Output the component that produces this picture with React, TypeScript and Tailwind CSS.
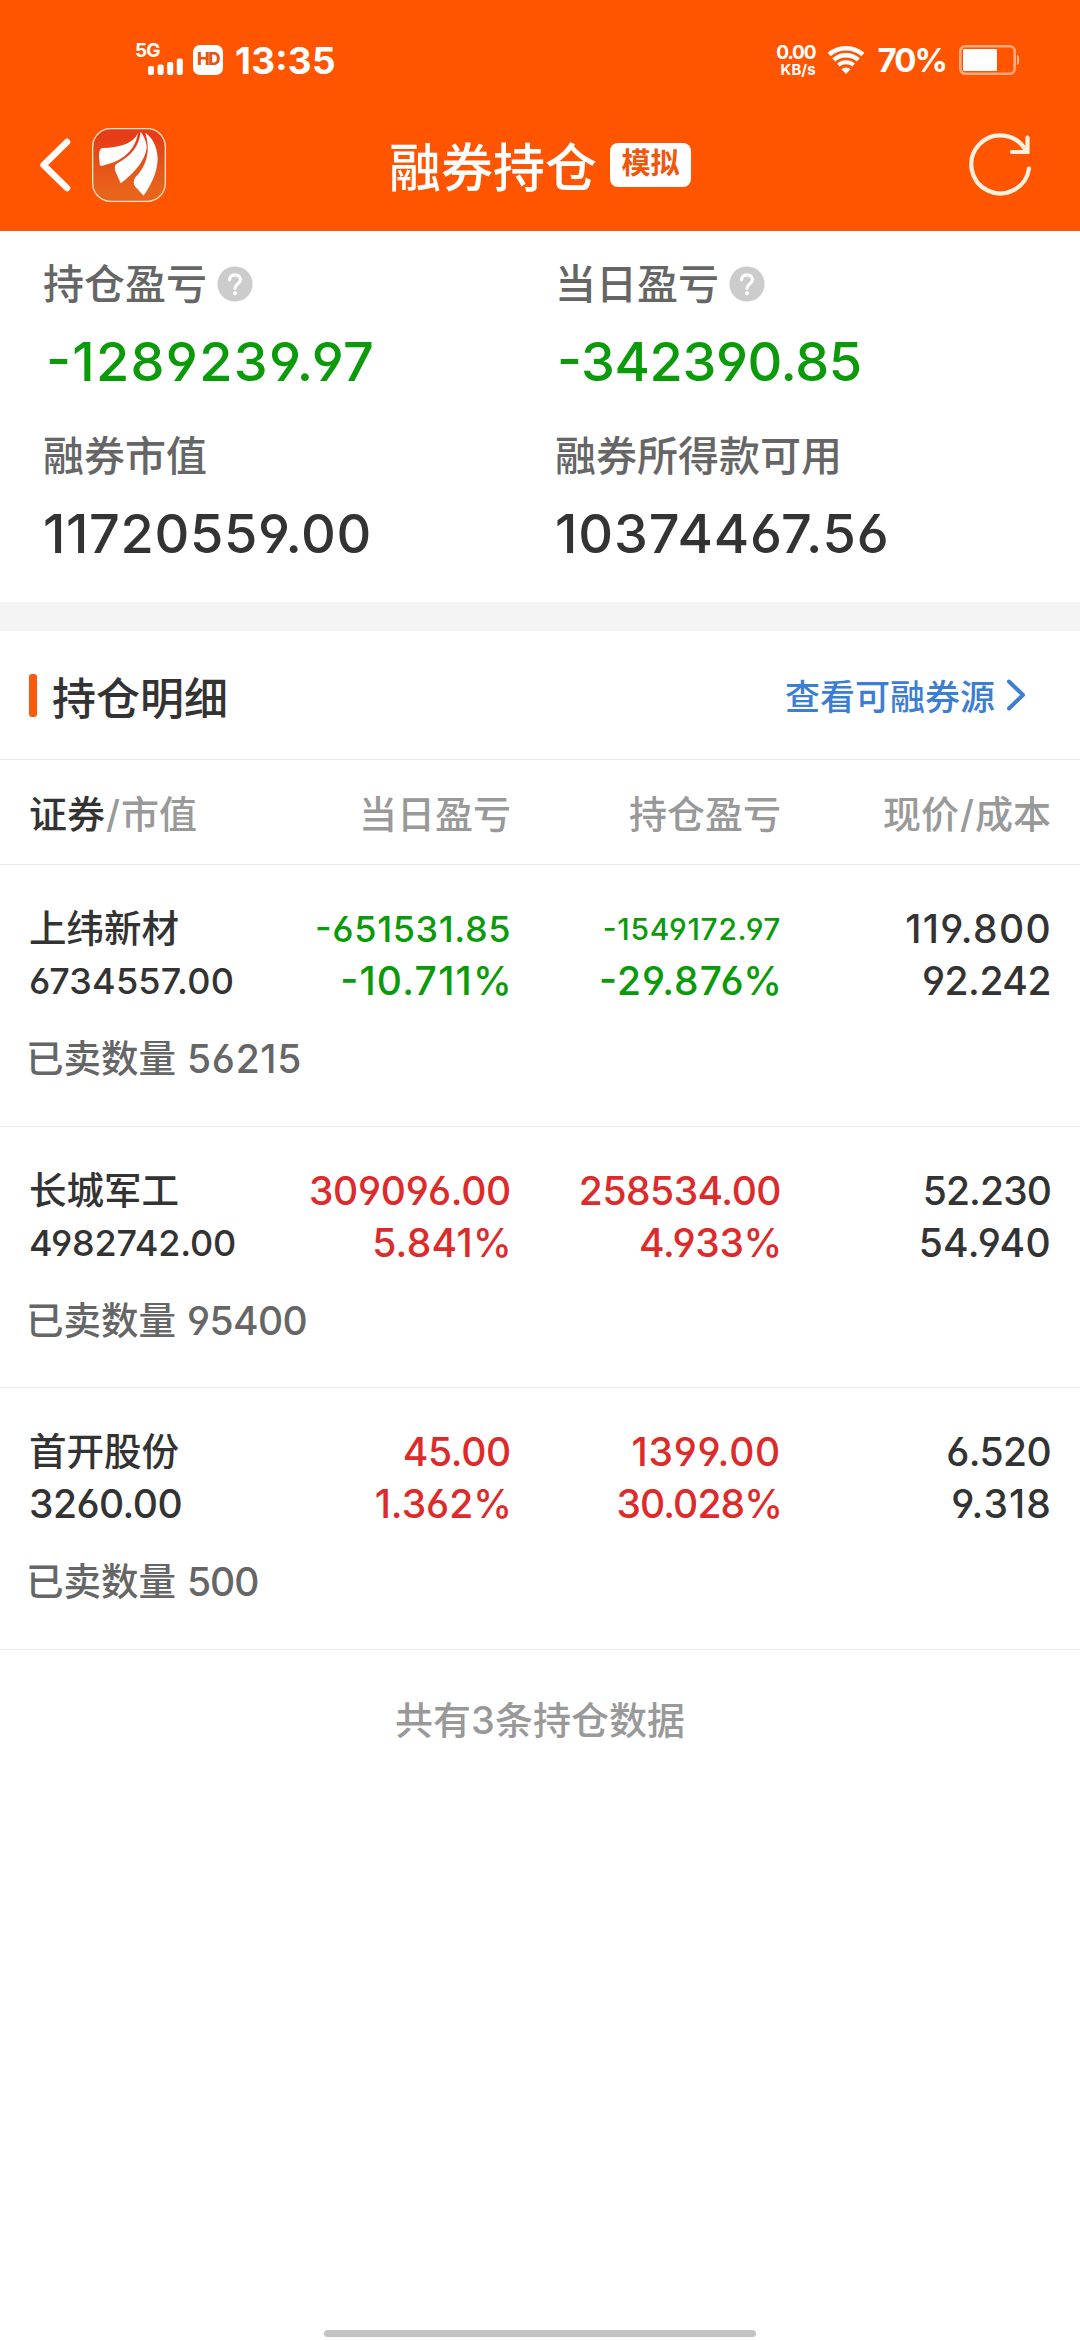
type Cell = { text: string; className: string };

type Holding = {
  name: string;
  value: Cell;
  daily: [Cell, Cell];
  total: [Cell, Cell];
  price: [Cell, Cell];
  sold: Cell;
};

const GREEN = "text-[#0a9a0a]";
const RED = "text-[#dd2b2b]";

const summary = [
  { label: "持仓盈亏", help: true, value: "-1289239.97", className: "pl-[3px] text-[#0a9a0a] tracking-[1.3px]" },
  { label: "当日盈亏", help: true, value: "-342390.85", className: "pl-[2px] text-[#0a9a0a] tracking-[-0.4px]" },
  { label: "融券市值", help: false, value: "11720559.00", className: "text-[#333] tracking-[0.65px]" },
  { label: "融券所得款可用", help: false, value: "10374467.56", className: "text-[#333] tracking-[0.9px]" },
];

const holdings: Holding[] = [
  {
    name: "上纬新材",
    value: { text: "6734557.00", className: "text-[36px] tracking-[0.2px]" },
    daily: [
      { text: "-651531.85", className: `${GREEN} text-[36px] tracking-[0.6px]` },
      { text: "-10.711%", className: `${GREEN} -mr-[2px] tracking-[1.25px]` },
    ],
    total: [
      { text: "-1549172.97", className: `${GREEN} text-[30px] tracking-[0.7px]` },
      { text: "-29.876%", className: `${GREEN} -mr-[2px] tracking-[1px]` },
    ],
    price: [
      { text: "119.800", className: "-mr-px tracking-[1.35px]" },
      { text: "92.242", className: "tracking-[-0.5px]" },
    ],
    sold: { text: "56215", className: "tracking-[0.7px]" },
  },
  {
    name: "长城军工",
    value: { text: "4982742.00", className: "text-[36px] tracking-[-0.2px]" },
    daily: [
      { text: "309096.00", className: `${RED} tracking-[-0.3px]` },
      { text: "5.841%", className: `${RED} -mr-px tracking-[0.3px]` },
    ],
    total: [
      { text: "258534.00", className: `${RED} tracking-[-0.5px]` },
      { text: "4.933%", className: `${RED} -mr-px tracking-[-0.3px]` },
    ],
    price: [
      { text: "52.230", className: "tracking-[-0.9px]" },
      { text: "54.940", className: "tracking-[0.3px]" },
    ],
    sold: { text: "95400", className: "tracking-[-0.6px]" },
  },
  {
    name: "首开股份",
    value: { text: "3260.00", className: "text-[39px] tracking-[-0.55px]" },
    daily: [
      { text: "45.00", className: `${RED} tracking-[-0.3px]` },
      { text: "1.362%", className: `${RED} -mr-px` },
    ],
    total: [
      { text: "1399.00", className: `${RED} tracking-[0.75px]` },
      { text: "30.028%", className: `${RED} -mr-px tracking-[-0.9px]` },
    ],
    price: [
      { text: "6.520", className: "tracking-[-0.6px]" },
      { text: "9.318", className: "-mr-px tracking-[1.1px]" },
    ],
    sold: { text: "500", className: "tracking-[-1px]" },
  },
];

function StatusBar() {
  return (
    <div className="flex h-[99px] items-center pt-[21px] pl-[135px] pr-[60px] font-bold text-white">
      <div className="relative h-[32px] w-[48px]">
        <span className="absolute left-0 top-0 text-[19px] leading-[14px] tracking-[-1px]">5G</span>
        <svg className="absolute bottom-[1px] right-0" width="35" height="17" fill="currentColor">
          <rect x="0" y="8" width="6" height="9" rx="2" />
          <rect x="9.6" y="6.5" width="6" height="10.5" rx="2" />
          <rect x="19.2" y="4" width="6" height="13" rx="2" />
          <rect x="28.8" y="0.5" width="6" height="16.5" rx="2" />
        </svg>
      </div>
      <div className="ml-[10px] flex h-[30px] w-[30px] items-center justify-center rounded-[7px] bg-white text-[17px] font-extrabold tracking-[-1.5px] text-[#e8530f]">
        HD
      </div>
      <span className="ml-[12px] pt-[2px] text-[37px] tracking-[0.2px]">13:35</span>

      <div className="ml-auto flex flex-col items-end">
        <span className="text-[19px] leading-none tracking-[-1.1px]">0.00</span>
        <span className="text-[15px] leading-none">KB/s</span>
      </div>
      <svg className="ml-[12px]" width="36" height="28" viewBox="0 0 36 28" fill="none" stroke="currentColor" strokeWidth="4.4">
        <path d="M1.1 8.5A25.8 25.8 0 0 1 34.9 8.5" />
        <path d="M5.7 13.9A18.7 18.7 0 0 1 30.3 13.9" />
        <path d="M10.3 19.1A11.8 11.8 0 0 1 25.7 19.1" strokeWidth="4" />
        <path d="M18 28L13.5 23.3A6.5 6.5 0 0 1 22.5 23.3Z" fill="currentColor" stroke="none" />
      </svg>
      <span className="ml-[14px] pt-[2px] text-[33px] tracking-[-2px]">70%</span>
      <svg className="ml-[13px]" width="61" height="30" viewBox="0 0 61 30">
        <rect x="1.3" y="1.3" width="54.4" height="27.4" rx="5" fill="none" stroke="#fff" strokeOpacity="0.5" strokeWidth="2.6" />
        <rect x="4" y="4" width="34" height="22" rx="1.5" fill="#fff" />
        <path d="M58.5 10.5C60 11 60 19 58.5 19.5Z" fill="#fff" fillOpacity="0.5" stroke="#fff" strokeOpacity="0.5" />
      </svg>
    </div>
  );
}

function AppLogo() {
  return (
    <svg className="ml-[21px]" width="74" height="74" viewBox="0 0 222 222">
      <defs>
        <linearGradient id="logo" x1="0" y1="0" x2="0" y2="1">
          <stop offset="0.1" stopColor="#e63c17" />
          <stop offset="0.85" stopColor="#e8641a" />
        </linearGradient>
      </defs>
      <rect x="2" y="2" width="218" height="218" rx="54" fill="url(#logo)" stroke="#ffe3c4" strokeWidth="4" />
      <g fill="#fff">
        <path d="M138 14C126 44 90 58 32 60C24 62 21 70 21 84L24 114C78 104 128 78 138 14Z" />
        <path d="M146 11C142 52 120 82 76 106C68 112 67 118 70 130L86 166C126 136 164 94 164 54C162 36 154 22 146 11Z" />
        <path d="M160 14C176 66 166 112 130 148C124 156 124 164 128 174L155 203C176 172 197 134 197 90C195 52 180 28 160 14Z" />
      </g>
    </svg>
  );
}

function NavBar() {
  return (
    <div className="flex h-[132px] items-center pl-[39px] pr-[45px] text-white">
      <svg width="32" height="54" viewBox="0 0 32 54" fill="none" stroke="currentColor" strokeWidth="6.5" strokeLinecap="round" strokeLinejoin="round">
        <path d="M28 4L4.5 27L28 50" />
      </svg>
      <AppLogo />
      <h1 className="ml-[223px] pt-[8px] text-[52px] leading-[60px]">融券持仓</h1>
      <span className="ml-[13px] flex h-[44px] w-[81px] items-center justify-center rounded-lg bg-white pb-[2px] text-[29px] leading-[36px] font-bold text-[#f0560c]">
        模拟
      </span>
      <svg className="ml-auto text-[#fff1e0]" width="70" height="70" viewBox="0 0 70 70" fill="none" stroke="currentColor" strokeWidth="4.2" strokeLinecap="round">
        <path d="M64 38.5A29 29 0 1 1 60.5 20" />
        <path d="M62.5 7.5V22H47" />
      </svg>
    </div>
  );
}

function HelpIcon() {
  return (
    <svg className="ml-[10px]" width="36" height="36" viewBox="0 0 36 36" fill="none">
      <circle cx="18" cy="18" r="17.6" fill="#ccc" />
      <path d="M12.5 14C12.5 10.6 15 8.8 18 8.8C21 8.8 23.5 10.8 23.5 13.8C23.5 17.6 18.2 17.8 18 22.2" stroke="#fff" strokeWidth="3.2" strokeLinecap="round" />
      <circle cx="18" cy="27.3" r="2.1" fill="#fff" />
    </svg>
  );
}

export default function App() {
  return (
    <div className="flex h-[2340px] w-[1080px] flex-col overflow-hidden whitespace-nowrap bg-white font-['Inter','Noto_Sans_CJK_SC',sans-serif] font-medium [font-feature-settings:'cv03','cv04','case']">
      <header className="bg-[#ff5500]">
        <StatusBar />
        <NavBar />
      </header>

      <section className="grid h-[371px] grid-cols-[512px_1fr] content-start pl-[43px] pt-[26px]">
        {summary.map((item) => (
          <div key={item.label} className="h-[172px]">
            <div className="flex h-[54px] items-center text-[41px] leading-[54px] text-[#666]">
              {item.label}
              {item.help && <HelpIcon />}
            </div>
            <div className={`mt-[21px] text-[54px] leading-[60px] ${item.className}`}>{item.value}</div>
          </div>
        ))}
      </section>

      <div className="h-[29px] bg-[#f4f4f4]" />

      <section className="flex h-[129px] items-center border-b border-[#ededed] pl-[29px] pr-[54px]">
        <span className="h-[43px] w-[8px] rounded-[3px] bg-[#fb5a0a]" />
        <h2 className="ml-[15px] pt-[7px] text-[44px] leading-[60px] text-[#333]">持仓明细</h2>
        <a href="#" className="ml-auto flex items-center text-[#3c7ed4]">
          <span className="pt-[4px] text-[35px] leading-[50px]">查看可融券源</span>
          <svg className="ml-[11px]" width="20" height="34" viewBox="0 0 20 34" fill="none" stroke="currentColor" strokeWidth="4" strokeLinecap="round" strokeLinejoin="round">
            <path d="M3 3.5L17 17L3 30.5" />
          </svg>
        </a>
      </section>

      <div className="grid h-[105px] grid-cols-[212px_270px_270px_270px] items-center border-b border-[#ededed] px-[29px] pt-[4px] text-right text-[38px] text-[#999]">
        <span className="text-left">
          <span className="text-[#333]">证券</span>
          <span className="px-px">/</span>市值
        </span>
        <span>当日盈亏</span>
        <span>持仓盈亏</span>
        <span>
          现价<span className="px-px">/</span>成本
        </span>
      </div>

      {holdings.map((h) => (
        <div key={h.name} className="h-[261.5px] border-b border-[#ededed] px-[29px] pt-[38px] text-[#333]">
          <div className="grid grid-cols-[212px_270px_270px_270px] text-[39px] leading-[52px]">
            <div>
              <div className="text-[37.5px]">{h.name}</div>
              <div className={h.value.className}>{h.value.text}</div>
            </div>
            {[h.daily, h.total, h.price].map((col, i) => (
              <div key={i} className="text-right">
                {col.map((c) => (
                  <div key={c.text} className={c.className}>{c.text}</div>
                ))}
              </div>
            ))}
          </div>
          <div className="-ml-[3px] mt-[26px] flex text-[37.5px] leading-[52px] text-[#666]">
            已卖数量
            <span className={`ml-[11px] text-[39px] ${h.sold.className}`}>{h.sold.text}</span>
          </div>
        </div>
      ))}

      <p className="pt-[45px] text-center text-[38px] leading-[50px] text-[#999]">共有3条持仓数据</p>

      <div className="mx-auto mb-[3px] mt-auto h-[7px] w-[432px] rounded-full bg-[#c3c3c3]" />
    </div>
  );
}
